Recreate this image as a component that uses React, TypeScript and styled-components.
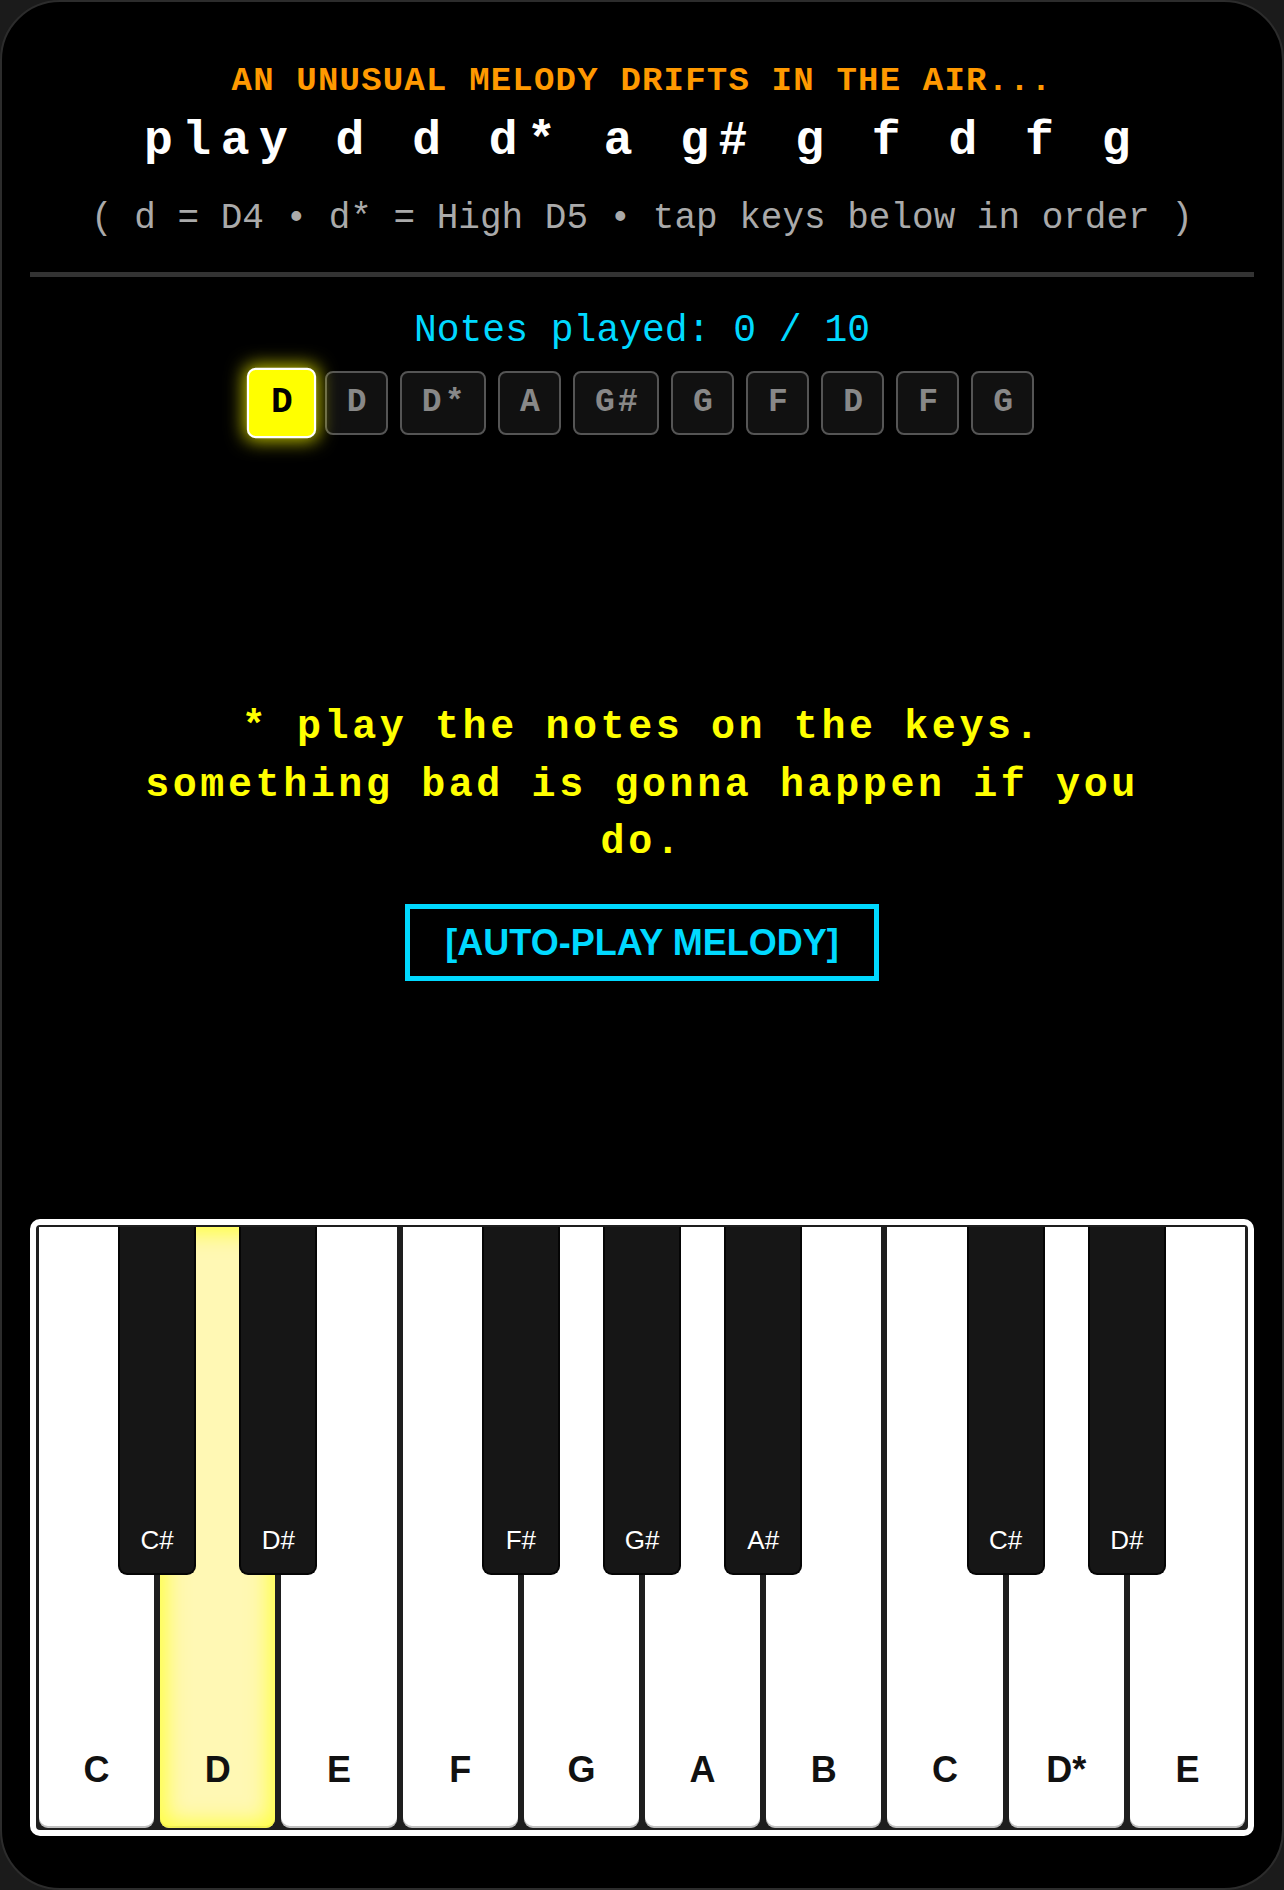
import React from "react";
import styled, { createGlobalStyle } from "styled-components";

const GlobalStyle = createGlobalStyle`
  html, body {
    margin: 0;
    padding: 0;
    background: #1b1b1b;
  }
  * { box-sizing: border-box; }
`;

const MONO = `"Liberation Mono", "Courier New", "DejaVu Sans Mono", monospace`;
const SANS = `"Liberation Sans", Arial, Helvetica, sans-serif`;

const Card = styled.div`
  width: 100%;
  min-height: 100vh;
  background: #000;
  border: 2px solid #2c2c2c;
  border-radius: 60px;
  padding: 59px 28px 52px;
  display: flex;
  flex-direction: column;
  font-family: ${MONO};
`;

const Tagline = styled.div`
  text-align: center;
  color: #ff9900;
  font-weight: 700;
  font-size: 34px;
  line-height: 40px;
  letter-spacing: 1.2px;
`;

const Melody = styled.div`
  margin-top: 12px;
  text-align: center;
  color: #fff;
  font-weight: 700;
  font-size: 48px;
  line-height: 56px;
  letter-spacing: 9.5px;
  white-space: pre;
`;

const Legend = styled.div`
  margin-top: 28px;
  text-align: center;
  color: #aaaaaa;
  font-size: 36px;
  line-height: 44px;
  white-space: pre;
`;

const Divider = styled.div`
  margin-top: 31px;
  height: 5px;
  background: #333;
`;

const Progress = styled.div`
  margin-top: 31px;
  text-align: center;
  color: #00d9ff;
  font-size: 38px;
  line-height: 46px;
`;

const ChipRow = styled.div`
  margin-top: 17px;
  display: flex;
  justify-content: center;
  gap: 12px;
`;

const Chip = styled.div<{ $active?: boolean }>`
  height: 64px;
  padding: 10px 16px 10px 20px;
  border-radius: 8px;
  border: 2px solid ${(p) => (p.$active ? "#ffffff" : "#555555")};
  background: ${(p) => (p.$active ? "#ffff00" : "#111111")};
  color: ${(p) => (p.$active ? "#000000" : "#888888")};
  font-family: ${MONO};
  font-weight: 700;
  font-size: 33px;
  line-height: 40px;
  letter-spacing: 3.25px;
  text-align: center;
  transform: ${(p) => (p.$active ? "scale(1.1)" : "none")};
  box-shadow: ${(p) => (p.$active ? "0 0 16px 2px rgba(255, 255, 0, 0.75)" : "none")};
`;

const Message = styled.div`
  margin-top: 264px;
  align-self: center;
  max-width: 1050px;
  text-align: center;
  color: #ffff00;
  font-weight: 700;
  font-size: 40px;
  line-height: 57.5px;
  letter-spacing: 3.6px;
`;

const AutoButton = styled.button`
  margin-top: 32px;
  align-self: center;
  background: transparent;
  border: 5px solid #00d9ff;
  padding: 13px 35px;
  color: #00d9ff;
  font-family: ${SANS};
  font-weight: 700;
  font-size: 36px;
  line-height: 41px;
  cursor: pointer;
`;

const Piano = styled.div`
  margin-top: auto;
  border: 6px solid #fff;
  border-radius: 10px;
  background: #1e1e1e;
  padding: 2px 3px;
  display: flex;
  gap: 6px;
  height: 617px;
`;

const WhiteKey = styled.div<{ $active?: boolean }>`
  position: relative;
  flex: 1;
  display: flex;
  align-items: flex-end;
  justify-content: center;
  padding-bottom: 38px;
  border-radius: 0 0 9px 9px;
  background: ${(p) => (p.$active ? "#fff8b4" : "#ffffff")};
  box-shadow: ${(p) =>
    p.$active
      ? "inset 0 0 22px 6px #ffff40, inset 0 -2px 0 rgba(0,0,0,0.25)"
      : "inset 0 -2px 0 rgba(0,0,0,0.25)"};
  color: #111;
  font-family: ${SANS};
  font-weight: 700;
  font-size: 36px;
  line-height: 40px;
`;

const BlackKey = styled.div`
  position: absolute;
  top: 0;
  right: -42px;
  width: 78px;
  height: 348px;
  z-index: 2;
  background: #161616;
  border: 2px solid #050505;
  border-top: none;
  border-radius: 0 0 9px 9px;
  display: flex;
  align-items: flex-end;
  justify-content: center;
  padding-bottom: 18px;
  color: #fff;
  font-family: ${SANS};
  font-weight: 400;
  font-size: 26px;
  line-height: 30px;
`;

const melody = ["D", "D", "D*", "A", "G#", "G", "F", "D", "F", "G"];

const keys: { note: string; sharp?: string; active?: boolean }[] = [
  { note: "C", sharp: "C#" },
  { note: "D", sharp: "D#", active: true },
  { note: "E" },
  { note: "F", sharp: "F#" },
  { note: "G", sharp: "G#" },
  { note: "A", sharp: "A#" },
  { note: "B" },
  { note: "C", sharp: "C#" },
  { note: "D*", sharp: "D#" },
  { note: "E" },
];

export default function App() {
  return (
    <>
      <GlobalStyle />
      <Card>
        <Tagline>AN UNUSUAL MELODY DRIFTS IN THE AIR...</Tagline>
        <Melody>play d d d* a g# g f d f g</Melody>
        <Legend>( d = D4 • d* = High D5 • tap keys below in order )</Legend>
        <Divider />
        <Progress>Notes played: 0 / 10</Progress>
        <ChipRow>
          {melody.map((n, i) => (
            <Chip key={i} $active={i === 0}>
              {n}
            </Chip>
          ))}
        </ChipRow>
        <Message>
          * play the notes on the keys. something bad is gonna happen if you do.
        </Message>
        <AutoButton>[AUTO-PLAY MELODY]</AutoButton>
        <Piano>
          {keys.map((k, i) => (
            <WhiteKey key={i} $active={k.active}>
              {k.note}
              {k.sharp && <BlackKey>{k.sharp}</BlackKey>}
            </WhiteKey>
          ))}
        </Piano>
      </Card>
    </>
  );
}
